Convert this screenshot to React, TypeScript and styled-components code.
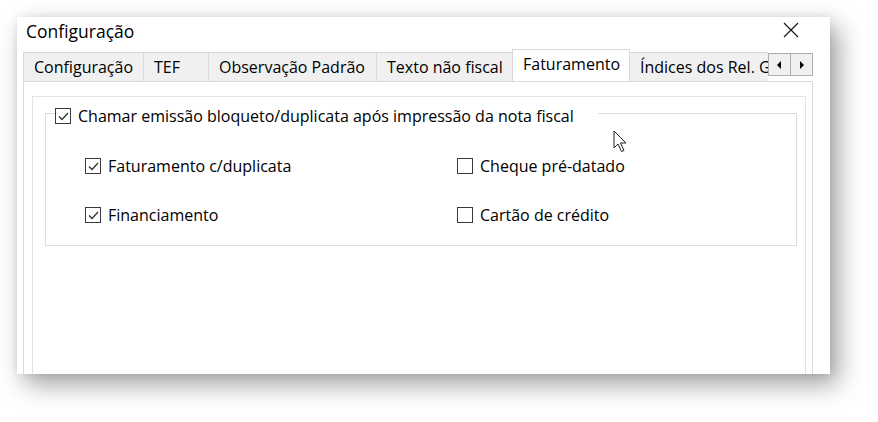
import styled, { createGlobalStyle } from "styled-components";

const GlobalStyle = createGlobalStyle`
  html, body {
    margin: 0;
    padding: 0;
    background: #ffffff;
  }
  body {
    font-family: "Open Sans", "Noto Sans", "Liberation Sans", sans-serif;
    color: #000;
  }
`;

const Page = styled.div`
  padding: 17px 0 0 17px;
  height: 422px;
  box-sizing: border-box;
  overflow: hidden;
`;

const Window = styled.div`
  position: relative;
  width: 813px;
  height: 357px;
  background: #fff;
  display: flex;
  flex-direction: column;
  overflow: hidden;
  box-shadow: 8px 10px 24px rgba(0, 0, 0, 0.38), 0 0 8px rgba(0, 0, 0, 0.08);
`;

const TitleBar = styled.div`
  height: 32px;
  flex-shrink: 0;
  display: flex;
  align-items: center;
  justify-content: space-between;
  padding: 0 31px 0 9px;
`;

const Title = styled.span`
  font-size: 17.5px;
  color: #000;
  margin-top: -5px;
`;

const CloseButton = styled.div`
  width: 16px;
  height: 16px;
  display: flex;
  margin-top: -6px;
`;

const TabControl = styled.div`
  flex: 1;
  display: flex;
  flex-direction: column;
  margin: 0 17px 0 6px;
  min-height: 0;
`;

const TabStrip = styled.div`
  height: 32px;
  flex-shrink: 0;
  display: flex;
  align-items: flex-end;
`;

const TabList = styled.div`
  flex: 1;
  display: flex;
  align-items: flex-end;
  overflow: hidden;
  height: 100%;
`;

const Tab = styled.div<{ $width: number; $active?: boolean }>`
  position: relative;
  flex-shrink: 0;
  box-sizing: border-box;
  width: ${(p) => p.$width}px;
  height: ${(p) => (p.$active ? 33 : 29)}px;
  margin-bottom: ${(p) => (p.$active ? -1 : 0)}px;
  margin-left: -1px;
  padding: 3px 0 0 10px;
  border: 1px solid #d9d9d9;
  border-bottom: ${(p) => (p.$active ? "none" : "1px solid transparent")};
  background: ${(p) => (p.$active ? "#fff" : "#f0f0f0")};
  z-index: ${(p) => (p.$active ? 2 : 1)};
  font-size: 16px;
  line-height: 22px;
  white-space: nowrap;
  overflow: hidden;

  &:first-child {
    margin-left: 0;
  }
`;

const ScrollButtons = styled.div`
  display: flex;
  align-self: flex-start;
  margin-top: 4px;
  border: 1px solid #adadad;
  background: #f0f0f0;
  position: relative;
  z-index: 3;
`;

const ScrollButton = styled.div`
  width: 21px;
  height: 21px;
  display: flex;
  align-items: center;
  justify-content: center;

  & + & {
    border-left: 1px solid #adadad;
  }
`;

const TabPage = styled.div`
  flex: 1;
  display: flex;
  flex-direction: column;
  border: 1px solid #d9d9d9;
  border-bottom: none;
  padding: 14px 6px 0 8px;
  min-height: 0;
`;

const Panel = styled.div`
  flex: 1;
  border: 1px solid #e3e3e3;
  border-bottom: none;
  padding: 16px 8px 0 12px;
`;

const GroupBox = styled.div`
  border: 1px solid #dcdcdc;
  border-top: none;
  padding-bottom: 21px;
`;

const GroupHeader = styled.div`
  display: flex;
  align-items: flex-start;
`;

const HeaderLine = styled.div<{ $grow?: boolean }>`
  border-top: 1px solid #dcdcdc;
  width: ${(p) => (p.$grow ? "auto" : "9px")};
  flex: ${(p) => (p.$grow ? 1 : "none")};
  margin-left: ${(p) => (p.$grow ? "24px" : "0")};
`;

const Options = styled.div`
  display: grid;
  grid-template-columns: 372px 1fr;
  row-gap: 31px;
  padding: 32px 0 0 39px;
`;

const CheckRow = styled.label<{ $caption?: boolean }>`
  display: flex;
  align-items: center;
  gap: 7px;
  height: 18px;
  font-size: 16px;
  color: #000;
  white-space: nowrap;
  margin-top: ${(p) => (p.$caption ? "-6px" : "0")};
`;

const Box = styled.span`
  width: 16px;
  height: 16px;
  box-sizing: border-box;
  border: 1.5px solid #3a3a3a;
  background: #fff;
  display: flex;
  align-items: center;
  justify-content: center;
  flex-shrink: 0;
`;

const Cursor = styled.svg`
  position: absolute;
  left: 596px;
  top: 113px;
`;

const Check = ({ checked, label, caption }: { checked: boolean; label: string; caption?: boolean }) => (
  <CheckRow $caption={caption}>
    <Box>
      {checked && (
        <svg width="13" height="13" viewBox="0 0 13 13">
          <path d="M2 6.5 L5 9.5 L11 3" fill="none" stroke="#333" strokeWidth="1.3" />
        </svg>
      )}
    </Box>
    {label}
  </CheckRow>
);

const tabs = [
  { label: "Configuração", width: 121 },
  { label: "TEF", width: 66 },
  { label: "Observação Padrão", width: 169 },
  { label: "Texto não fiscal", width: 137 },
  { label: "Faturamento", width: 118, active: true },
  { label: "Índices dos Rel. Gerenciais", width: 160 },
];

export default function App() {
  return (
    <>
      <GlobalStyle />
      <Page>
        <Window>
          <TitleBar>
            <Title>Configuração</Title>
            <CloseButton>
              <svg width="16" height="16" viewBox="0 0 16 16">
                <path d="M1 1 L15 15 M15 1 L1 15" stroke="#111" strokeWidth="1.1" />
              </svg>
            </CloseButton>
          </TitleBar>
          <TabControl>
            <TabStrip>
              <TabList>
                {tabs.map((t) => (
                  <Tab key={t.label} $width={t.width} $active={t.active}>
                    {t.label}
                  </Tab>
                ))}
              </TabList>
              <ScrollButtons>
                <ScrollButton>
                  <svg width="5" height="8" viewBox="0 0 5 8">
                    <path d="M4 0 L0 4 L4 8 Z" fill="#000" />
                  </svg>
                </ScrollButton>
                <ScrollButton>
                  <svg width="5" height="8" viewBox="0 0 5 8">
                    <path d="M1 0 L5 4 L1 8 Z" fill="#000" />
                  </svg>
                </ScrollButton>
              </ScrollButtons>
            </TabStrip>
            <TabPage>
              <Panel>
                <GroupBox>
                  <GroupHeader>
                    <HeaderLine />
                    <Check checked caption label="Chamar emissão bloqueto/duplicata após impressão da nota fiscal" />
                    <HeaderLine $grow />
                  </GroupHeader>
                  <Options>
                    <Check checked label="Faturamento c/duplicata" />
                    <Check checked={false} label="Cheque pré-datado" />
                    <Check checked label="Financiamento" />
                    <Check checked={false} label="Cartão de crédito" />
                  </Options>
                </GroupBox>
              </Panel>
            </TabPage>
          </TabControl>
          <Cursor width="16" height="23" viewBox="0 0 16 23">
            <path d="M1 1 L1 18 L5 14 L8.5 21.5 L11 20.5 L7.5 13 L13 13 Z" fill="#fff" stroke="#222" strokeWidth="1" strokeLinejoin="round" />
          </Cursor>
        </Window>
      </Page>
    </>
  );
}
